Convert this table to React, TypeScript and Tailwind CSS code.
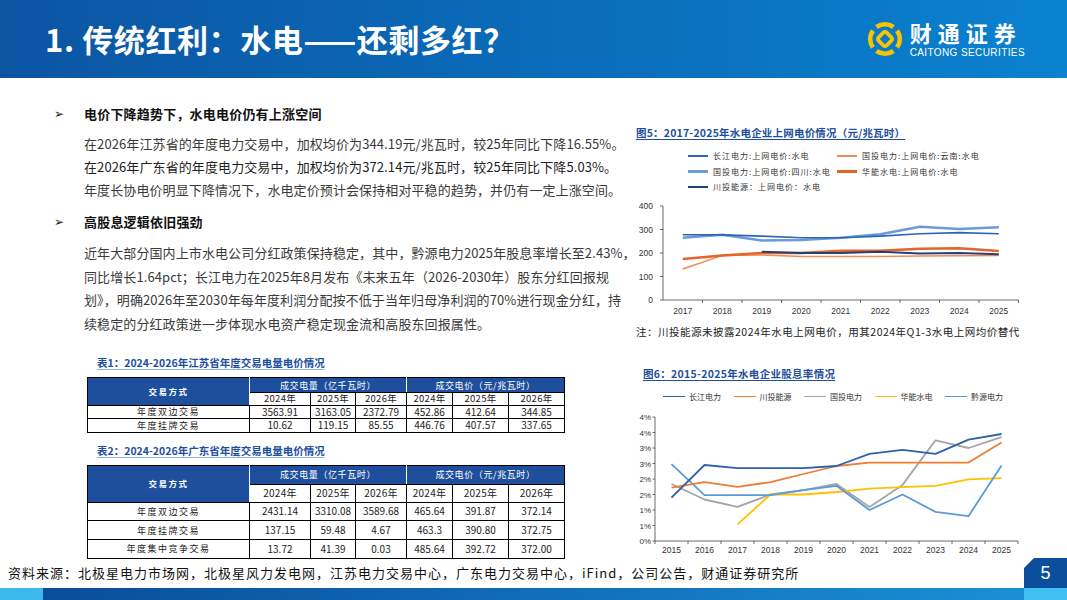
import React from "react";

const cjk = "font-['Noto_Sans_CJK_SC',sans-serif]";

type Series = { name: string; color: string; width: number; vals: (number | null)[] };

function pts(vals: (number | null)[], xf: (i: number) => number, yf: (v: number) => number) {
  return vals
    .map((v, i) => (v == null ? null : `${xf(i).toFixed(1)},${yf(v).toFixed(1)}`))
    .filter(Boolean)
    .join(" ");
}

// chart 1: feed-in tariff
const years1 = ["2017", "2018", "2019", "2020", "2021", "2022", "2023", "2024", "2025"];
const x1 = (i: number) => 27 + 39.5 * (i + 0.5);
const y1 = (v: number) => 102 - v * 0.235;
const series1: Series[] = [
  { name: "gtyn", color: "#f08c4e", width: 1.5, vals: [132, 190, 192, 185, 185, 185, 187, 188, 190] },
  { name: "hn", color: "#e2652b", width: 2.5, vals: [175, 190, 200, 200, 210, 210, 218, 220, 208] },
  { name: "ct", color: "#23407c", width: 2, vals: [null, null, 205, 200, 200, 205, 198, 200, 195] },
  { name: "gtsc", color: "#6a9bd8", width: 2.5, vals: [265, 278, 253, 255, 265, 280, 312, 302, 310] },
  { name: "cj", color: "#2f64b8", width: 1.6, vals: [278, 277, 272, 265, 265, 272, 282, 287, 282] },
];

// chart 2: dividend yield
const years2 = ["2015", "2016", "2017", "2018", "2019", "2020", "2021", "2022", "2023", "2024", "2025"];
const x2 = (i: number) => 19 + 33 * (i + 0.5);
const y2 = (v: number) => 133 - v * 31;
const series2: Series[] = [
  { name: "国投电力", color: "#a5a5a5", width: 1.8, vals: [1.84, 1.34, 1.1, 1.5, 1.64, 1.84, 1.1, 1.81, 3.25, 3.0, 3.35] },
  { name: "华能水电", color: "#ffc000", width: 1.8, vals: [null, null, 0.54, 1.5, 1.5, 1.58, 1.69, 1.74, 1.78, 1.99, 2.03] },
  { name: "黔源电力", color: "#5b9bd5", width: 1.8, vals: [2.48, 1.48, 1.48, 1.48, 1.64, 1.78, 1.0, 1.5, 0.94, 0.8, 2.44] },
  { name: "川投能源", color: "#ed7d31", width: 1.8, vals: [1.72, 1.9, 1.75, 1.9, 2.16, 2.42, 2.53, 2.53, 2.53, 2.53, 3.18] },
  { name: "长江电力", color: "#2f5fae", width: 1.8, vals: [1.4, 2.45, 2.35, 2.35, 2.35, 2.42, 2.81, 2.94, 2.81, 3.27, 3.45] },
];

const legend2 = [
  { name: "长江电力", color: "#2f5fae" },
  { name: "川投能源", color: "#ed7d31" },
  { name: "国投电力", color: "#a5a5a5" },
  { name: "华能水电", color: "#ffc000" },
  { name: "黔源电力", color: "#5b9bd5" },
];

function Chart1() {
  return (
    <svg width="394" height="122" className="block">
      {[0, 100, 200, 300, 400].map((v) => (
        <g key={v}>
          <line x1="24" x2="27" y1={y1(v)} y2={y1(v)} stroke="#444" strokeWidth="0.8" />
          <text x="17" y={y1(v) + 3} textAnchor="end" fontSize="8.5" fill="#333" fontFamily="Liberation Sans, sans-serif">
            {v}
          </text>
        </g>
      ))}
      <line x1="27" x2="27" y1={y1(400)} y2="102" stroke="#444" strokeWidth="0.8" />
      <line x1="27" x2="382.5" y1="102" y2="102" stroke="#444" strokeWidth="0.8" />
      {years1.map((y, i) => (
        <g key={y}>
          <line x1={27 + 39.5 * (i + 1)} x2={27 + 39.5 * (i + 1)} y1="102" y2="105" stroke="#444" strokeWidth="0.8" />
          <text x={x1(i)} y="116" textAnchor="middle" fontSize="8.5" fill="#333" fontFamily="Liberation Sans, sans-serif">
            {y}
          </text>
        </g>
      ))}
      {series1.map((s) => (
        <polyline key={s.name} points={pts(s.vals, x1, y1)} fill="none" stroke={s.color} strokeWidth={s.width} strokeLinejoin="round" />
      ))}
    </svg>
  );
}

function Chart2() {
  const ticks = [4, 3.5, 3, 2.5, 2, 1.5, 1, 0.5, 0];
  const labels = ["4%", "4%", "3%", "3%", "2%", "2%", "1%", "1%", "0%"];
  return (
    <svg width="394" height="148" className="block">
      {ticks.map((v, i) => (
        <g key={v}>
          <line x1="16.5" x2="19" y1={y2(v)} y2={y2(v)} stroke="#444" strokeWidth="0.8" />
          <text x="15" y={y2(v) + 3} textAnchor="end" fontSize="8" fill="#333" fontFamily="Liberation Sans, sans-serif">
            {labels[i]}
          </text>
        </g>
      ))}
      <line x1="19" x2="19" y1={y2(4)} y2="133" stroke="#444" strokeWidth="0.8" />
      <line x1="19" x2="382" y1="133" y2="133" stroke="#444" strokeWidth="0.8" />
      {years2.map((y, i) => (
        <g key={y}>
          <line x1={19 + 33 * i} x2={19 + 33 * i} y1="133" y2="136" stroke="#444" strokeWidth="0.8" />
          <text x={x2(i)} y="145" textAnchor="middle" fontSize="8.5" fill="#333" fontFamily="Liberation Sans, sans-serif">
            {y}
          </text>
        </g>
      ))}
      <line x1="382" x2="382" y1="133" y2="136" stroke="#444" strokeWidth="0.8" />
      {series2.map((s) => (
        <polyline key={s.name} points={pts(s.vals, x2, y2)} fill="none" stroke={s.color} strokeWidth={s.width} strokeLinejoin="round" />
      ))}
    </svg>
  );
}

function Logo() {
  return (
    <div className="flex items-center gap-[6px]">
      <svg width="38" height="38" viewBox="0 0 40 40">
        <g fill="none" stroke="#f6c400" strokeWidth="5">
          <path d="M11.1 7.3 A15.5 15.5 0 0 1 28.9 7.3" />
          <path d="M32.7 11.1 A15.5 15.5 0 0 1 32.7 28.9" />
          <path d="M28.9 32.7 A15.5 15.5 0 0 1 11.1 32.7" />
          <path d="M7.3 28.9 A15.5 15.5 0 0 1 7.3 11.1" />
        </g>
        <rect x="14" y="14" width="12" height="12" rx="2.5" transform="rotate(45 20 20)" fill="none" stroke="#f6c400" strokeWidth="4" />
      </svg>
      <div className="flex flex-col text-white">
        <span className={`${cjk} text-[22px] font-bold leading-[25px] tracking-[6px]`}>财通证券</span>
        <span className="mt-[2px] font-['Liberation_Sans',sans-serif] text-[10px] leading-[11px] tracking-[0.4px]">CAITONG SECURITIES</span>
      </div>
    </div>
  );
}

type Row = string[];

function DataTable({ rows, headH, yearH, rowH, small }: { rows: Row[]; headH: string; yearH: string; rowH: string; small?: boolean }) {
  const yrs = ["2024年", "2025年", "2026年", "2024年", "2025年", "2026年"];
  const yearText = small ? "text-[9.5px]" : "text-[10px]";
  return (
    <table className={`${cjk} table-fixed border-collapse border border-black text-[#222]`}>
      <colgroup>
        <col className="w-[162px]" />
        <col className="w-[61px]" />
        <col className="w-[45px]" />
        <col className="w-[51px]" />
        <col className="w-[46px]" />
        <col className="w-[56px]" />
        <col className="w-[56px]" />
      </colgroup>
      <tbody>
        <tr className={headH}>
          <td rowSpan={2} className="border border-black border-r-white bg-[#1e4f9c] p-0 text-center text-[8.5px] font-bold tracking-[1.5px] text-white">
            交易方式
          </td>
          <td colSpan={3} className="border border-black border-r-white bg-[#1e4f9c] p-0 text-center text-[9px] leading-none tracking-[0.6px] text-white">
            成交电量（亿千瓦时）
          </td>
          <td colSpan={3} className="border border-black bg-[#1e4f9c] p-0 text-center text-[9px] leading-none tracking-[0.6px] text-white">
            成交电价（元/兆瓦时）
          </td>
        </tr>
        <tr className={yearH}>
          {yrs.map((y, i) => (
            <td key={i} className={`border border-black p-0 text-center leading-none tracking-[0.3px] ${yearText}`}>
              {y}
            </td>
          ))}
        </tr>
        {rows.map((r) => (
          <tr key={r[0]} className={rowH}>
            <td className="border border-black p-0 text-center text-[9px] leading-none tracking-[1.5px]">{r[0]}</td>
            {r.slice(1).map((c, i) => (
              <td key={i} className="border border-black p-0 text-center text-[10px] leading-none">
                {c}
              </td>
            ))}
          </tr>
        ))}
      </tbody>
    </table>
  );
}

const table1: Row[] = [
  ["年度双边交易", "3563.91", "3163.05", "2372.79", "452.86", "412.64", "344.85"],
  ["年度挂牌交易", "10.62", "119.15", "85.55", "446.76", "407.57", "337.65"],
];

const table2: Row[] = [
  ["年度双边交易", "2431.14", "3310.08", "3589.68", "465.64", "391.87", "372.14"],
  ["年度挂牌交易", "137.15", "59.48", "4.67", "463.3", "390.80", "372.75"],
  ["年度集中竞争交易", "13.72", "41.39", "0.03", "485.64", "392.72", "372.00"],
];

function Bullet({ children }: { children: React.ReactNode }) {
  return (
    <div className="flex h-[20px] items-center">
      <span className="w-[30px] font-['DejaVu_Sans',sans-serif] text-[12px] text-[#222]">➢</span>
      <span className={`${cjk} text-[13px] font-bold tracking-[0.2px] text-[#111]`}>{children}</span>
    </div>
  );
}

export default function App() {
  return (
    <div className={`${cjk} flex h-[600px] w-[1067px] flex-col overflow-hidden bg-white`}>
      <header className="flex h-[78px] shrink-0 items-center justify-between bg-linear-to-r from-[#0b55a3] to-[#0a82d0] pl-[45px] pr-[42px]">
        <h1 className="text-[31px] font-bold tracking-[0.6px] text-white">1. 传统红利：水电——还剩多红？</h1>
        <Logo />
      </header>

      <main className="flex h-[480px] shrink-0">
        <section className="w-[632px] shrink-0 pl-[54px] pt-[26px]">
          <Bullet>电价下降趋势下，水电电价仍有上涨空间</Bullet>
          <div className="mt-[8px] whitespace-nowrap pl-[30px] text-[13px] leading-[23px] tracking-[0.1px] text-[#3a3a3a]">
            <p>在2026年江苏省的年度电力交易中，加权均价为344.19元/兆瓦时，较25年同比下降16.55%。</p>
            <p className="text-[#222]">在2026年广东省的年度电力交易中，加权均价为372.14元/兆瓦时，较25年同比下降5.03%。</p>
            <p>年度长协电价明显下降情况下，水电定价预计会保持相对平稳的趋势，并仍有一定上涨空间。</p>
          </div>
          <div className="mt-[11px]">
            <Bullet>高股息逻辑依旧强劲</Bullet>
          </div>
          <div className="mt-[9px] whitespace-nowrap pl-[30px] text-[13px] leading-[23.5px] tracking-[0.1px] text-[#3a3a3a]">
            <p>近年大部分国内上市水电公司分红政策保持稳定，其中，黔源电力2025年股息率增长至2.43%，</p>
            <p>同比增长1.64pct；长江电力在2025年8月发布《未来五年（2026-2030年）股东分红回报规</p>
            <p>划》，明确2026年至2030年每年度利润分配按不低于当年归母净利润的70%进行现金分红，持</p>
            <p>续稳定的分红政策进一步体现水电资产稳定现金流和高股东回报属性。</p>
          </div>

          <div className="ml-[33px] mt-[21px] flex flex-col items-start">
            <h3 className="ml-[10px] text-[10.5px] font-bold leading-[14px] text-[#1e4f9c] underline decoration-[#8fb0dc] underline-offset-2">
              表1：2024-2026年江苏省年度交易电量电价情况
            </h3>
            <div className="mt-[7px]">
              <DataTable rows={table1} headH="h-[15px]" yearH="h-[12.5px]" rowH="h-[13.5px]" small />
            </div>
            <h3 className="ml-[10px] mt-[11px] text-[10.5px] font-bold leading-[14px] text-[#1e4f9c] underline decoration-[#8fb0dc] underline-offset-2">
              表2：2024-2026年广东省年度交易电量电价情况
            </h3>
            <div className="mt-[7px]">
              <DataTable rows={table2} headH="h-[19px]" yearH="h-[18px]" rowH="h-[18.7px]" />
            </div>
          </div>
        </section>

        <section className="flex w-[435px] shrink-0 flex-col pl-[4px]">
          <h3 className="mt-[48px] text-[10.5px] font-bold leading-[14px] tracking-[0.2px] text-[#1e4f9c] underline decoration-[#1e4f9c] underline-offset-2">
            图5：2017-2025年水电企业上网电价情况（元/兆瓦时）
          </h3>
          <div className="ml-[52px] mt-[8px] grid grid-cols-[149px_1fr] text-[8px] leading-[15.5px] tracking-[1px] text-[#333]">
            <div className="flex items-center gap-[5px]">
              <span className="h-[1.5px] w-[20px] bg-[#2f64b8]" />
              长江电力:上网电价:水电
            </div>
            <div className="flex items-center gap-[5px]">
              <span className="h-[1.5px] w-[20px] bg-[#f08c4e]" />
              国投电力:上网电价:云南:水电
            </div>
            <div className="flex items-center gap-[5px]">
              <span className="h-[3px] w-[20px] bg-[#6a9bd8]" />
              国投电力:上网电价:四川:水电
            </div>
            <div className="flex items-center gap-[5px]">
              <span className="h-[3px] w-[20px] bg-[#e2652b]" />
              华能水电:上网电价:水电
            </div>
            <div className="flex items-center gap-[5px]">
              <span className="h-[2px] w-[20px] bg-[#23407c]" />
              川投能源：上网电价：水电
            </div>
          </div>
          <div className="mt-[3px]">
            <Chart1 />
          </div>
          <p className="mt-[5px] text-[10.5px] leading-[14px] tracking-[0.5px] text-[#222]">
            注：川投能源未披露2024年水电上网电价，用其2024年Q1-3水电上网均价替代
          </p>
          <h3 className="ml-[7px] mt-[28px] text-[10.5px] font-bold leading-[14px] tracking-[0.3px] text-[#1e4f9c] underline decoration-[#1e4f9c] underline-offset-2">
            图6：2015-2025年水电企业股息率情况
          </h3>
          <div className="ml-[27px] mt-[9px] flex text-[8px] leading-[14px] text-[#333]">
            {legend2.map((l) => (
              <div key={l.name} className="flex w-[70.5px] items-center gap-[4px]">
                <span className="h-[1.5px] w-[22px]" style={{ backgroundColor: l.color }} />
                {l.name}
              </div>
            ))}
          </div>
          <div className="mt-[4px]">
            <Chart2 />
          </div>
        </section>
      </main>

      <footer className="flex h-[30px] shrink-0 items-center justify-between">
        <p className="pl-[8px] text-[13px] tracking-[1px] text-[#111]">
          资料来源：北极星电力市场网，北极星风力发电网，江苏电力交易中心，广东电力交易中心，iFind，公司公告，财通证券研究所
        </p>
        <div className="flex h-[30px] w-[43px] items-center justify-center bg-[#0b4f9c] font-['Liberation_Sans',sans-serif] text-[18px] text-white [clip-path:polygon(10px_0,100%_0,100%_100%,0_100%,0_10px)]">
          5
        </div>
      </footer>
      <div className="flex h-[12px] shrink-0">
        <div className="w-[43px] bg-[#3cb9ec]" />
        <div className="flex-1 bg-linear-to-r from-[#0a4d9a] to-[#1b8fd6]" />
        <div className="w-[43px] bg-[#40c0f0]" />
      </div>
    </div>
  );
}
